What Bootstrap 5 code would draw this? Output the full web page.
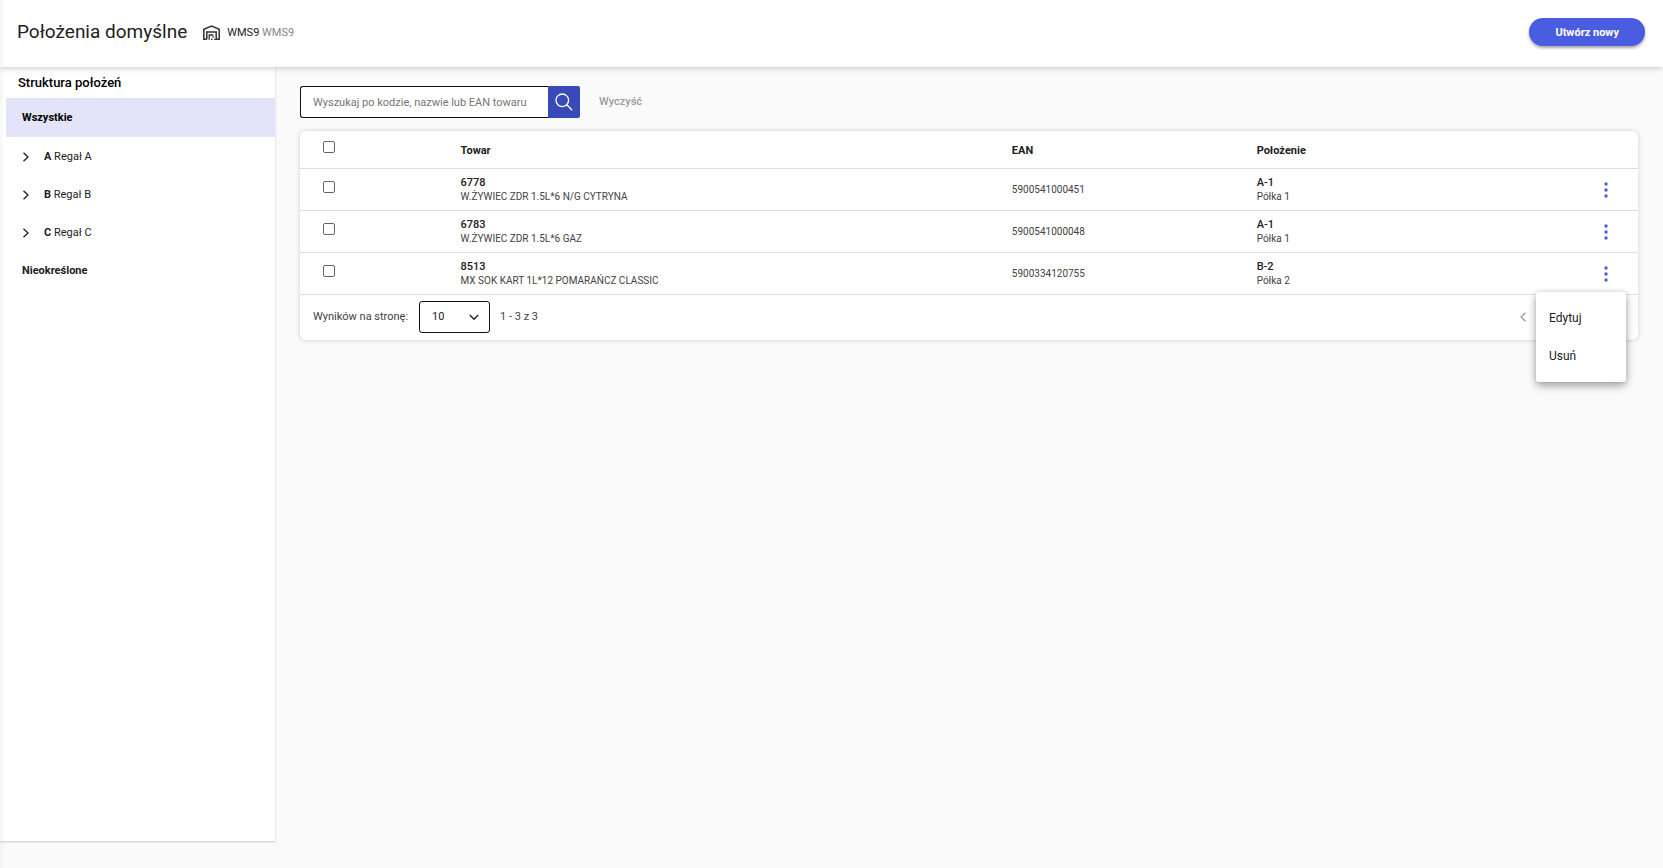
<!DOCTYPE html>
<html lang="pl">
<head>
<meta charset="utf-8">
<meta name="viewport" content="width=device-width, initial-scale=1">
<title>Położenia domyślne</title>
<link href="https://cdn.jsdelivr.net/npm/bootstrap@5.3.0/dist/css/bootstrap.min.css" rel="stylesheet">
<style>
  body { font-family: Roboto, sans-serif; font-size: 11px; line-height: 16px; color: #212121; background: #fafafa; }
  .edge-shade { width: 5px; background: linear-gradient(to right, rgba(0,0,0,.035), rgba(0,0,0,0)); z-index: 5; pointer-events: none; }
  .topbar { height: 67px; padding: 0 18px 3px 17px; background: #fff; box-shadow: 0 1px 6px rgba(0,0,0,.22); z-index: 2; }
  .page-title { font-size: 19px; line-height: 28px; font-weight: 400; }
  .warehouse { gap: 7px; padding-top: 1px; }
  .muted { color: #868686; }
  .btn-create { height: 28px; padding: 0 26px; border: 0; border-radius: 14px; background: #4a5ce0; color: #fff; font-size: 11px; font-weight: 700; line-height: 29px; box-shadow: 0 2px 3px rgba(0,0,0,.35); }
  .btn-create:hover { background: #3949b9; color: #fff; }
  .side { width: 275px; margin-bottom: 27px; background: #fff; box-shadow: 0 1px 2px rgba(0,0,0,.2); }
  .side-title { padding: 8px 18px 7px; font-size: 13px; line-height: 16px; font-weight: 500; color: #000; }
  .side-list { padding-left: 6px; }
  .side-link { height: 38px; padding-left: 16px; color: #212121; text-decoration: none; }
  .side-link svg { margin-right: 14px; }
  .side-link.chosen { height: 39px; margin-bottom: 1px; background: #e3e3f9; color: #000; }
  .work { padding: 19px 25px 24px; }
  .search-box { width: 280px; height: 32px; }
  .search-box .form-control { height: 32px; padding: 0 12px; border: 1px solid #111; border-right: 0; border-radius: 3px 0 0 3px; font-size: 11px; color: #212121; }
  .search-box .form-control::placeholder { color: #757575; }
  .btn-search { width: 32px; padding: 0; border: 0; border-radius: 0 2px 2px 0; background: #3949b9; }
  .btn-clear { padding: 1px 19px 0; border: 0; color: #9b9b9b; font-size: 11px; font-weight: 500; }
  .panel { margin-top: 13px; background: #fff; border-radius: 6px; box-shadow: 0 0 5px rgba(0,0,0,.18); }
  .grid-table { width: 100%; table-layout: fixed; border-collapse: separate; border-spacing: 0; }
  .grid-table th, .grid-table td { padding: 0; border-bottom: 1px solid #dedede; vertical-align: middle; }
  .grid-table th { height: 38px; padding-top: 2px; font-weight: 700; }
  .grid-table td { height: 42px; }
  .grid-table .pick { width: 12%; padding: 0 0 5px 23px; }
  .c-item { width: 41.2%; }
  .c-ean { width: 18.3%; }
  .c-act { width: 64px; }
  .pick input { display: block; width: 12px; height: 12px; margin: 0; appearance: none; border: 1px solid #666; border-radius: 2px; background: #fff; }
  .pick input:checked { background: #3949b9; }
  .code { padding-top: 1px; font-weight: 500; line-height: 14px; }
  .sub { font-size: 10px; line-height: 14px; color: #424242; }
  .btn-dots { width: 24px; height: 24px; padding: 0; border: 0; margin-left: 20px; }
  .row-menu { top: 39px; right: 12px; min-width: 90px; padding: 7px 0 7px; border: 0; border-radius: 3px; background: #fff; box-shadow: 0 4px 8px rgba(0,0,0,.32), 0 0 6px rgba(0,0,0,.12); }
  .row-menu .dropdown-item { height: 38px; padding: 0 13px; font-size: 12px; line-height: 36px; color: #212121; }
  .pager { height: 45px; padding: 0 110px 1px 13px; color: #424242; }
  .page-size { width: 71px; height: 32px; margin: 0 10px 0 11px; }
  .page-size select { width: 100%; height: 100%; padding: 0 12px; border: 1px solid #111; border-radius: 3px; appearance: none; background: #fff; font-size: 11px; color: #212121; }
  .page-size svg { right: 11px; top: 12px; pointer-events: none; }
</style>
</head>
<body>
<div class="d-flex flex-column min-vh-100 position-relative">
  <div class="edge-shade position-absolute top-0 bottom-0 start-0"></div>
  <header class="topbar d-flex align-items-center position-relative">
    <h1 class="page-title mb-0">Położenia domyślne</h1>
    <div class="warehouse d-flex align-items-center ms-3">
      <svg width="17" height="16" viewBox="0 0 17 16" fill="none" stroke="#333" stroke-width="1.500" aria-hidden="true"><path d="M3.800 14.300H.8V4.200L8.500 1l7.700 3.200v10.100h-3V7H3.800v7.300"/><path d="M6.200 14.800V10h4.200M8 14.300h1.600M11 14.300h1.600M9.300 12h1.500" stroke-width="1.300"/></svg>
      <span>WMS9 <span class="muted">WMS9</span></span>
    </div>
    <button type="button" class="btn btn-create ms-auto">Utwórz nowy</button>
  </header>
  <div class="d-flex flex-grow-1">
    <aside class="side flex-shrink-0">
      <h2 class="side-title mb-0">Struktura położeń</h2>
      <nav class="side-list d-flex flex-column" aria-label="Struktura położeń">
        <a href="#" class="side-link chosen fw-bold d-flex align-items-center">Wszystkie</a>
        <a href="#" class="side-link d-flex align-items-center"><svg width="8" height="10" viewBox="0 0 8 10" fill="none" stroke="#222" stroke-width="1.300"><path d="M1.500.8 6 5 1.500 9.200"/></svg><span><span class="fw-bold">A</span> Regał A</span></a>
        <a href="#" class="side-link d-flex align-items-center"><svg width="8" height="10" viewBox="0 0 8 10" fill="none" stroke="#222" stroke-width="1.300"><path d="M1.500.8 6 5 1.500 9.200"/></svg><span><span class="fw-bold">B</span> Regał B</span></a>
        <a href="#" class="side-link d-flex align-items-center"><svg width="8" height="10" viewBox="0 0 8 10" fill="none" stroke="#222" stroke-width="1.300"><path d="M1.500.8 6 5 1.500 9.200"/></svg><span><span class="fw-bold">C</span> Regał C</span></a>
        <a href="#" class="side-link fw-bold d-flex align-items-center">Nieokreślone</a>
      </nav>
    </aside>
    <main class="work flex-grow-1">
      <form class="d-flex align-items-center">
        <div class="search-box input-group flex-nowrap">
          <input type="text" class="form-control" placeholder="Wyszukaj po kodzie, nazwie lub EAN towaru" aria-label="Wyszukaj po kodzie, nazwie lub EAN towaru">
          <button type="button" class="btn btn-search d-flex align-items-center justify-content-center" aria-label="Szukaj"><svg width="18" height="18" viewBox="0 0 18 18" fill="none" stroke="#fff" stroke-width="1.300"><circle cx="7.300" cy="7.300" r="6.300"/><path d="m11.800 11.800 5.400 5.400"/></svg></button>
        </div>
        <button type="button" class="btn btn-clear">Wyczyść</button>
      </form>
      <section class="panel">
        <table class="grid-table">
          <thead>
            <tr><th class="pick"><input type="checkbox" aria-label="Zaznacz wszystkie"></th><th class="c-item">Towar</th><th class="c-ean">EAN</th><th>Położenie</th><th class="c-act"></th></tr>
          </thead>
          <tbody>
            <tr>
              <td class="pick"><input type="checkbox" aria-label="Zaznacz 6778"></td>
              <td><div class="code">6778</div><div class="sub">W.ŻYWIEC ZDR 1.5L*6 N/G CYTRYNA</div></td>
              <td class="sub">5900541000451</td>
              <td><div class="code">A-1</div><div class="sub">Półka 1</div></td>
              <td><button type="button" class="btn btn-dots d-flex align-items-center justify-content-center" aria-label="Akcje"><svg width="4" height="16" viewBox="0 0 4 16" fill="#4a5ce0"><circle cx="2" cy="2" r="1.700"/><circle cx="2" cy="8" r="1.700"/><circle cx="2" cy="14" r="1.700"/></svg></button></td>
            </tr>
            <tr>
              <td class="pick"><input type="checkbox" aria-label="Zaznacz 6783"></td>
              <td><div class="code">6783</div><div class="sub">W.ŻYWIEC ZDR 1.5L*6 GAZ</div></td>
              <td class="sub">5900541000048</td>
              <td><div class="code">A-1</div><div class="sub">Półka 1</div></td>
              <td><button type="button" class="btn btn-dots d-flex align-items-center justify-content-center" aria-label="Akcje"><svg width="4" height="16" viewBox="0 0 4 16" fill="#4a5ce0"><circle cx="2" cy="2" r="1.700"/><circle cx="2" cy="8" r="1.700"/><circle cx="2" cy="14" r="1.700"/></svg></button></td>
            </tr>
            <tr>
              <td class="pick"><input type="checkbox" aria-label="Zaznacz 8513"></td>
              <td><div class="code">8513</div><div class="sub">MX SOK KART 1L*12 POMARAŃCZ CLASSIC</div></td>
              <td class="sub">5900334120755</td>
              <td><div class="code">B-2</div><div class="sub">Półka 2</div></td>
              <td class="position-relative"><button type="button" class="btn btn-dots d-flex align-items-center justify-content-center" aria-label="Akcje" aria-expanded="true"><svg width="4" height="16" viewBox="0 0 4 16" fill="#4a5ce0"><circle cx="2" cy="2" r="1.700"/><circle cx="2" cy="8" r="1.700"/><circle cx="2" cy="14" r="1.700"/></svg></button>
                <div class="row-menu dropdown-menu show">
                  <button type="button" class="dropdown-item">Edytuj</button>
                  <button type="button" class="dropdown-item">Usuń</button>
                </div>
              </td>
            </tr>
          </tbody>
        </table>
        <div class="pager d-flex align-items-center">
          <label for="pageSize">Wyników na stronę:</label>
          <div class="page-size position-relative">
            <select id="pageSize"><option>10</option><option>25</option><option>50</option></select>
            <svg class="position-absolute" width="10" height="8" viewBox="0 0 10 8" fill="none" stroke="#222" stroke-width="1.400"><path d="M.8 2 5 6.200 9.200 2"/></svg>
          </div>
          <span>1 - 3 z 3</span>
          <button type="button" class="btn border-0 p-0 ms-auto d-flex" aria-label="Poprzednia strona"><svg width="10" height="10" viewBox="0 0 10 10" fill="none" stroke="#9a9a9a" stroke-width="1.300"><path d="M7.500.8 3 5l4.500 4.200"/></svg></button>
        </div>
      </section>
    </main>
  </div>
</div>
<script src="https://cdn.jsdelivr.net/npm/bootstrap@5.3.0/dist/js/bootstrap.bundle.min.js"></script>
</body>
</html>
